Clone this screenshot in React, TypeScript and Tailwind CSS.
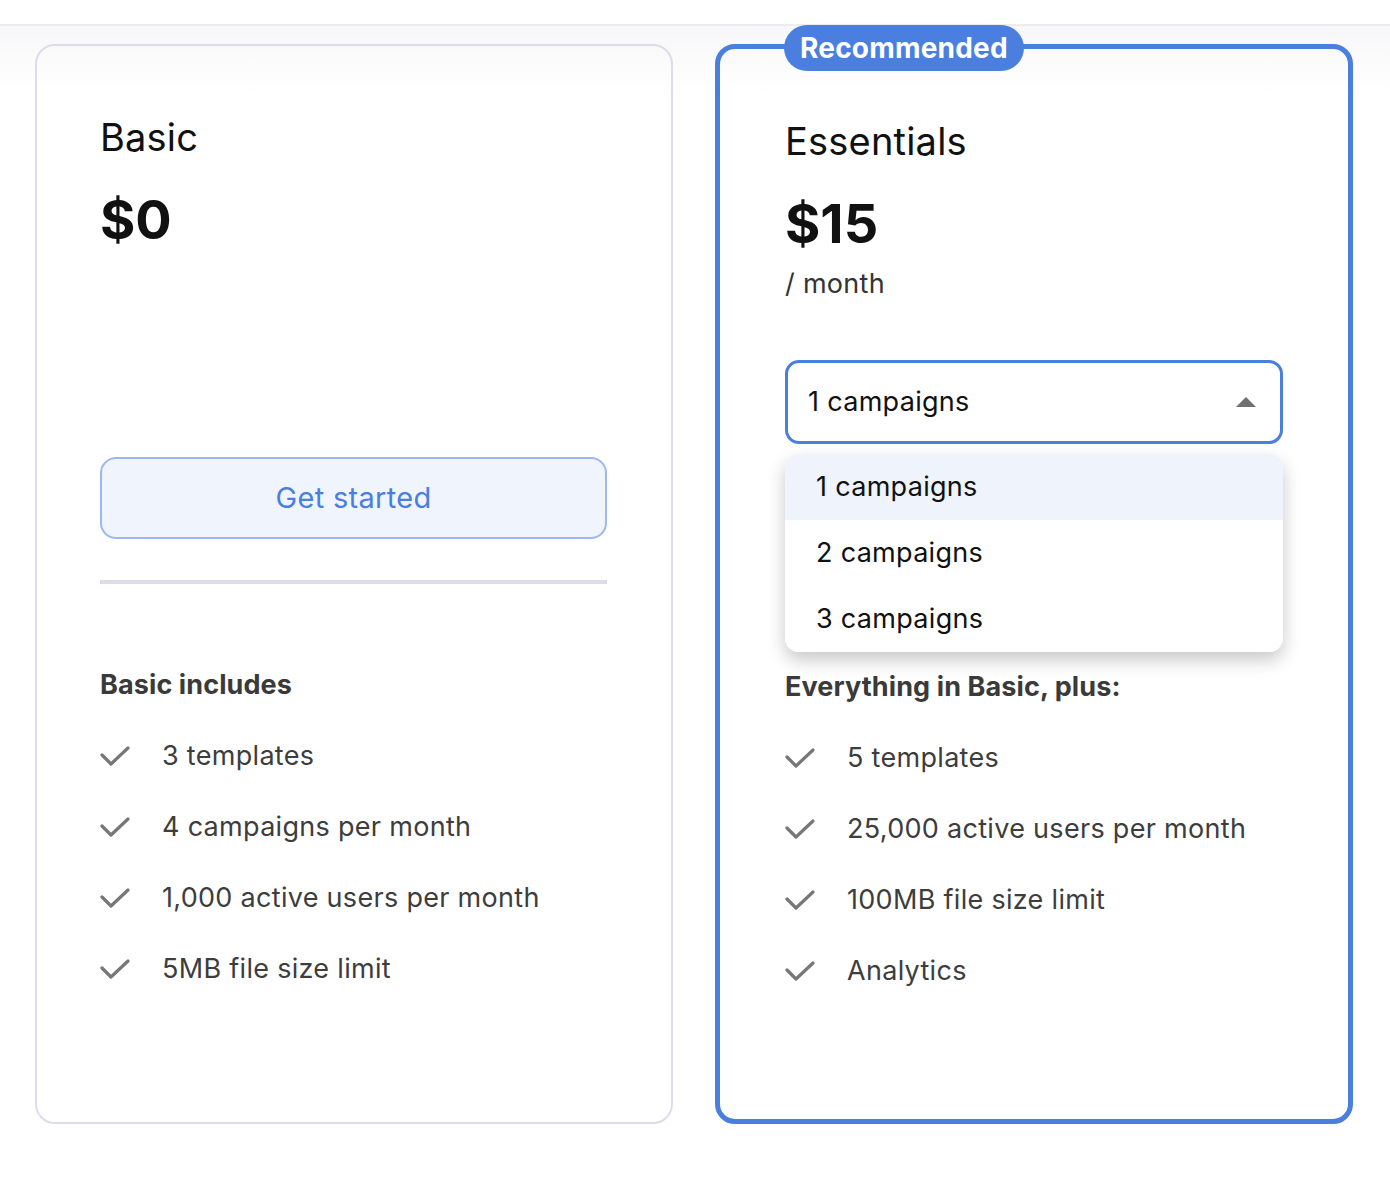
import React from "react";

const basicFeatures = [
  "3 templates",
  "4 campaigns per month",
  "1,000 active users per month",
  "5MB file size limit",
];

const essentialFeatures = [
  "5 templates",
  "25,000 active users per month",
  "100MB file size limit",
  "Analytics",
];

function Check() {
  return (
    <svg width="30" height="20" viewBox="0 0 30 20" fill="none" className="shrink-0">
      <polyline
        points="2,9 11,18 28,2"
        stroke="#777777"
        strokeWidth="3.2"
        strokeLinecap="round"
        strokeLinejoin="round"
      />
    </svg>
  );
}

function FeatureList({ title, items, top }: { title: string; items: string[]; top: string }) {
  return (
    <div className={"flex flex-col gap-[39px] " + top}>
      <h3 className="text-[27px] leading-[32px] font-bold tracking-[0.1px] text-[#3a3a3a]">{title}</h3>
      {items.map((item) => (
        <div key={item} className="flex items-center gap-[32px] h-[32px]">
          <Check />
          <span className="text-[27px] leading-[32px] tracking-[0.3px] text-[#3d3d3d]">{item}</span>
        </div>
      ))}
    </div>
  );
}

function PriceHead({ name, price }: { name: string; price: string }) {
  return (
    <>
      <h2 className="text-[38px] leading-[46px] tracking-[0.2px] text-[#111]">{name}</h2>
      <div className="mt-[28px] text-[54px] leading-[64px] font-bold text-[#111]">{price}</div>
    </>
  );
}

function GetStarted() {
  return (
    <button className="h-[82px] w-full rounded-[16px] border-2 border-[#9bb8f0] bg-[#eff4fd] text-[29px] tracking-[0.3px] text-[#4a7fe0]">
      Get started
    </button>
  );
}

const options = ["1 campaigns", "2 campaigns", "3 campaigns"];

export default function App() {
  return (
    <div
      className="min-h-[1188px] bg-white text-black"
      style={{ fontFamily: "Inter, 'Noto Sans', sans-serif" }}
    >
      <div className="h-[24px] bg-white" />
      <div className="border-t-2 border-[#ededed] bg-[linear-gradient(to_bottom,#f7f7f9_0px,#ffffff_70px)] pt-[18px] pb-[64px]">
        <div className="ml-[35px] grid w-[1318px] grid-cols-2 gap-[42px]">
          {/* Basic */}
          <div className="h-[1080px] rounded-[20px] border-2 border-[#dcdcea] pl-[63px] pr-[64px] pt-[68px]">
            <PriceHead name="Basic" price="$0" />
            <div className="invisible h-[205px]" />
            <GetStarted />
            <div className="mt-[41px] h-[4px] bg-[#dcdce8]" />
            <FeatureList title="Basic includes" items={basicFeatures} top="mt-[85px]" />
          </div>

          {/* Essentials */}
          <div className="relative h-[1080px] rounded-[20px] border-[5px] border-[#4a7fe0] px-[65px] pt-[69px]">
            <span className="absolute -top-[24px] left-[64px] flex h-[46px] items-center rounded-full bg-[#4a7fe0] px-[16px] text-[28px] font-bold tracking-[0.2px] text-white">
              Recommended
            </span>
            <PriceHead name="Essentials" price="$15" />
            <div className="mt-[12px] text-[27px] leading-[32px] tracking-[0.3px] text-[#333]">/ month</div>
            <div className="relative mt-[60px]">
              <div className="flex h-[84px] items-center justify-between rounded-[14px] border-[3px] border-[#4a7fe0] pl-[20px] pr-[24px]">
                <span className="text-[27px] tracking-[0.3px] text-[#111]">1 campaigns</span>
                <svg width="20" height="10" viewBox="0 0 20 10">
                  <polygon points="0,10 10,0 20,10" fill="#6f6f6f" />
                </svg>
              </div>
              <ul className="absolute left-0 right-0 top-[94px] z-10 overflow-hidden rounded-[14px] bg-white shadow-[0_8px_18px_rgba(0,0,0,0.22)]">
                {options.map((o, i) => (
                  <li
                    key={o}
                    className={
                      "flex h-[66px] items-center pl-[31px] text-[27px] tracking-[0.3px] text-[#111] " +
                      (i === 0 ? "bg-[#eef3fc]" : "bg-white")
                    }
                  >
                    {o}
                  </li>
                ))}
              </ul>
            </div>
            <div className="mt-[17px]">
              <GetStarted />
            </div>
            <div className="mt-[41px] h-[4px] bg-[#dcdce8]" />
            <FeatureList title="Everything in Basic, plus:" items={essentialFeatures} top="mt-[83px]" />
          </div>
        </div>
      </div>
    </div>
  );
}
